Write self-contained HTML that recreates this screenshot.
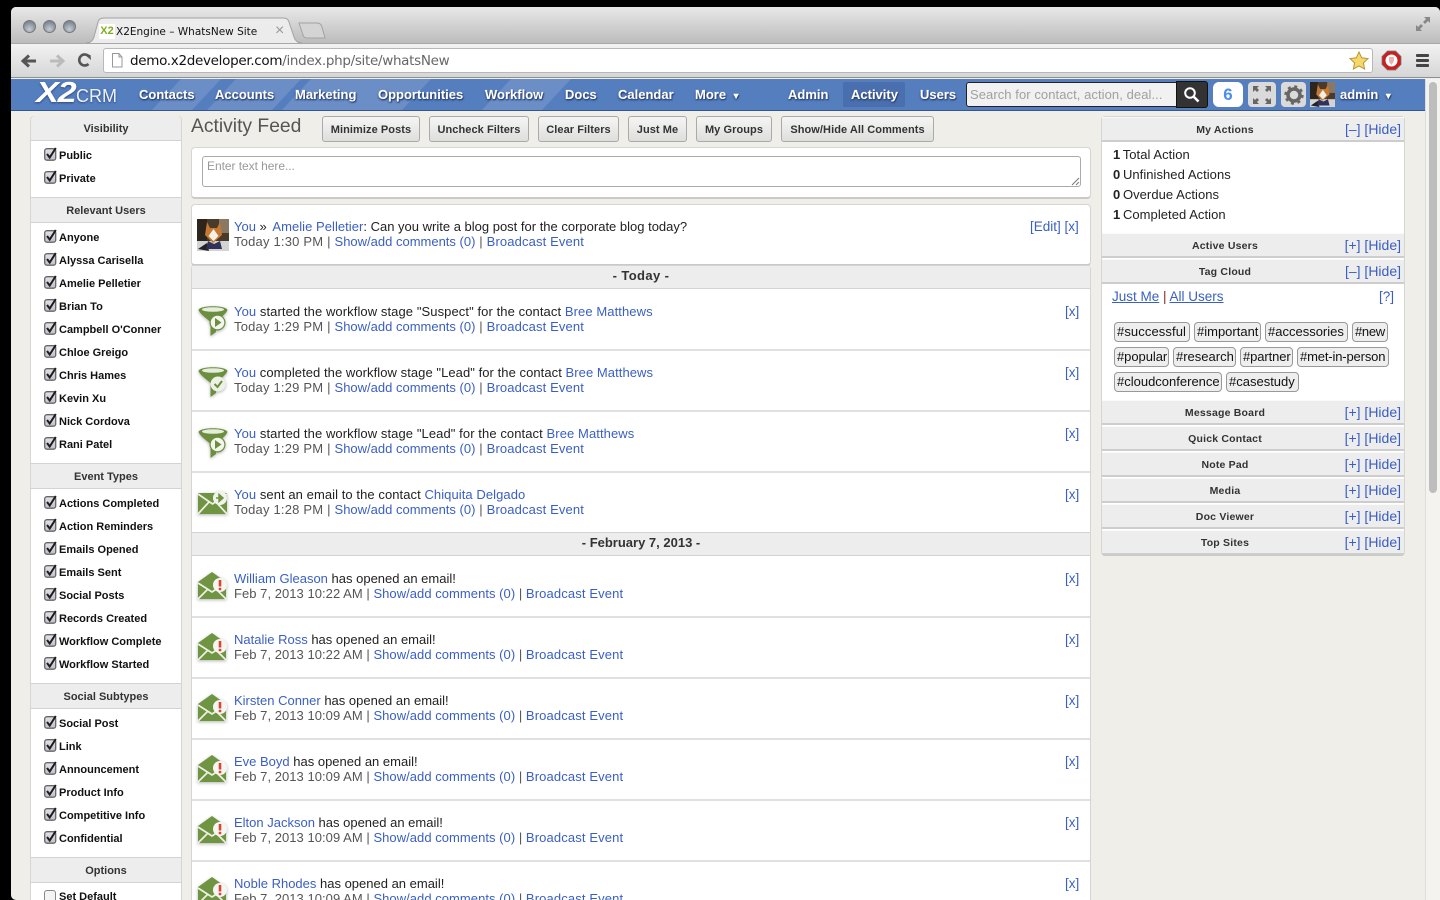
<!DOCTYPE html>
<html><head><meta charset="utf-8"><title>X2Engine - WhatsNew Site</title>
<style>
*{box-sizing:border-box}
html,body{margin:0;padding:0;width:1440px;height:900px;overflow:hidden;background:#000;font-family:"Liberation Sans",Arial,sans-serif}
.a{position:absolute;white-space:nowrap}
a{color:#3a5fc4;text-decoration:none}
#win{position:absolute;left:11px;top:7px;width:1429px;height:893px;background:#efeee9;border-radius:5px 5px 0 5px;overflow:hidden}
#root{position:absolute;left:0;top:0;width:1440px;height:900px;overflow:hidden}
.dot{position:absolute;top:20px;width:13px;height:13px;border-radius:50%;background:radial-gradient(circle at 50% 75%,#c4ccd6,#7d8793 75%);border:1px solid #777}
.nav{position:absolute;top:87px;color:#fff;font-weight:bold;font-size:13px;line-height:15px;text-shadow:0 1px 2px #1d3360,1px 1px 1px #31508f,0 0 1px #fff;white-space:nowrap}
.panel{position:absolute;background:#fff;border:1px solid #d5d5d2;border-bottom:2px solid #c9c9c6;border-radius:4px}
.h{position:absolute;background:#ededed;border-top:1px solid #d3d3d3;border-bottom:1px solid #d3d3d3;text-align:center;font-weight:bold;font-size:11px;color:#333}
.c{position:absolute;left:59px;font-size:11px;font-weight:bold;color:#111;line-height:13px;white-space:nowrap}
.cb{position:absolute;left:44px;width:13px;height:14px}
.btn{position:absolute;top:116px;height:26px;border:1px solid #aaa;border-radius:3px;background:linear-gradient(#f5f5f3,#dededc);font-weight:bold;font-size:11px;color:#333;line-height:26px;text-align:center;letter-spacing:.07px;white-space:nowrap}
.f{position:absolute;left:234px;font-size:13px;line-height:15px;color:#222;white-space:nowrap;letter-spacing:.085px}
.o{letter-spacing:0}
.g{color:#555;letter-spacing:.2px}
.g a{letter-spacing:.04px}
.g:not(.d) a:first-child{letter-spacing:0}
.g a:last-child{letter-spacing:.13px}
.d{letter-spacing:.04px}
.x{position:absolute;left:1065px;font-size:13.500px;line-height:15px;color:#3a5fc4}
.ln{position:absolute;left:192px;width:898px;height:2px;background:#e0e0e0}
.dh{position:absolute;left:192px;width:898px;height:24px;background:#ededed;border-top:1px solid #d3d3d3;border-bottom:1px solid #d3d3d3;text-align:center;font-weight:bold;font-size:13px;line-height:20px;color:#333}
.ic{position:absolute;left:197px;width:32px;height:32px}
.sh{filter:drop-shadow(0 1px 1.500px rgba(0,0,0,.3))}
.rh{position:absolute;left:1102px;width:302px;height:25px;background:#ededed;border-top:1px solid #fafafa;border-bottom:2px solid #cdcdcd;text-align:center;font-weight:bold;font-size:10.500px;line-height:24px;color:#333;letter-spacing:.2px;padding-right:56px}
.rl{position:absolute;right:0;top:0;font-weight:normal;font-size:14px;line-height:22px;letter-spacing:0;padding-right:3px;color:#3a5fc4;white-space:pre}
.t{position:absolute;height:20px;border:1px solid #999;border-radius:4px;background:#eee;font-size:13px;line-height:18px;padding:0 2px;color:#111;white-space:nowrap}
.ma{position:absolute;left:1113px;font-size:13px;line-height:15px;color:#222;letter-spacing:.05px;white-space:nowrap}
.ma b{margin-right:-1px}
</style></head><body>
<svg width="0" height="0" style="position:absolute">
<linearGradient id="cbg" x1="0" y1="0" x2="0" y2="1"><stop offset="0" stop-color="#e2e2ea"/><stop offset="1" stop-color="#bfc2cc"/></linearGradient>
<symbol id="ck" viewBox="0 0 13 14"><rect x=".7" y="1.700" width="11" height="11.500" rx="2.200" fill="url(#cbg)" stroke="#666" stroke-width="1.300"/><path d="M3 7l2.700 3.500L11.800 1" fill="none" stroke="#1c1c1c" stroke-width="2"/></symbol>
<symbol id="fn" viewBox="0 0 32 32"><path d="M1.500 6C3 1 29 1 30.500 6C29 10 23 14 19 18V28L13.500 32V18C9 14 3 10 1.500 6Z" fill="#6b8f3f"/><ellipse cx="16" cy="5.500" rx="11" ry="2.300" fill="#e7eddc"/><circle cx="20.500" cy="18.500" r="8" fill="#6b8f3f"/><circle cx="20.500" cy="18.500" r="6.800" fill="#f3f6ec"/><path d="M18 14l6.500 4.500-6.500 4.500z" fill="#6b8f3f"/></symbol>
<symbol id="fc" viewBox="0 0 32 32"><path d="M1.500 6C3 1 29 1 30.500 6C29 10 23 14 19 18V28L13.500 32V18C9 14 3 10 1.500 6Z" fill="#6b8f3f"/><ellipse cx="16" cy="5.500" rx="11" ry="2.300" fill="#e7eddc"/><circle cx="21" cy="19" r="7.500" fill="#eef1e6"/><path d="M17.500 19l3 3 4.500-6" fill="none" stroke="#6b8f3f" stroke-width="2"/></symbol>
<symbol id="es" viewBox="0 0 32 32"><rect x="1" y="5" width="29" height="21" fill="#6f9442"/><path d="M1 6l14.500 10L30 6M1 26l11-12M30 26L19 14" fill="none" stroke="#eef2e5" stroke-width="1.700"/><circle cx="23" cy="10" r="7" fill="#f1f4ea"/><path d="M19 10h5M22 6.500l4 3.500-4 3.500z" fill="#6f9442" stroke="#6f9442" stroke-width="1.500"/></symbol>
<symbol id="eo" viewBox="0 0 32 32"><path d="M1 10L15 0 29 10V27H1Z" fill="#6f9442"/><path d="M1 11l14 9 14-9M1 27l10-10M29 27L19 17" fill="none" stroke="#eef2e5" stroke-width="1.700"/><circle cx="23" cy="13" r="7" fill="#f6f6f1"/><path d="M23 8v6.500" stroke="#d9443a" stroke-width="2.600"/><circle cx="23" cy="17" r="1.400" fill="#d9443a"/></symbol>
<symbol id="dog" viewBox="0 0 32 32"><rect width="32" height="32" fill="#4a3a2a"/><rect x="0" width="10" height="22" fill="#2d241c"/><rect x="22" width="10" height="14" fill="#8a7862"/><rect y="22" width="32" height="10" fill="#d3d3d3"/><path d="M1 30l9-6 2 8z" fill="#222"/><path d="M10 3l3 6h7l3-6 2 13-9 8-8-8z" fill="#c47a35"/><path d="M16.500 10l5 7-5 5-5-5z" fill="#f6efe4"/><path d="M9 30l2-8 6 3 6-3 2 8z" fill="#31315a"/></symbol>
</svg>
<div id="root">
<div id="win">
<div style="position:absolute;left:0;top:0;width:1429px;height:36px;background:linear-gradient(#e8e8e8,#bcbcbc)"></div>
<div style="position:absolute;left:0;top:36px;width:1429px;height:35px;background:linear-gradient(#f2f2f2,#d6d6d6);border-top:1px solid #a8a8a8;border-bottom:1px solid #8f8f8f"></div>
</div>
<div class="dot" style="left:23px"></div><div class="dot" style="left:43px"></div><div class="dot" style="left:63px"></div>
<svg class="a" style="left:75px;top:17px" width="260" height="27"><path d="M11 26Q17 26 19 20L23 5Q24 1 29 1H208Q213 1 214 5L219 20Q221 26 227 26" fill="#ececec" stroke="#a2a2a2"/><path d="M224 6H242Q246 6 247 10L250 21H232Q229 21 228 18Z" fill="#d4d4d4" stroke="#a2a2a2"/></svg>
<div class="a" style="left:99px;top:24px;width:16px;height:15px;background:#fff;color:#7fae1e;font-weight:bold;font-size:11px;line-height:15px;text-align:center">X2</div>
<div class="a" style="left:116px;top:24px;font-family:'DejaVu Sans',sans-serif;font-size:10.500px;line-height:16px;color:#111">X2Engine – WhatsNew Site</div>
<div class="a" style="left:275px;top:23px;font-size:16px;line-height:16px;color:#999">×</div>
<svg class="a" style="left:1415px;top:16px" width="16" height="16"><path d="M9 1h6v6l-2-2-3 3-2-2 3-3zM7 15H1V9l2 2 3-3 2 2-3 3z" fill="#888"/></svg>
<svg class="a" style="left:20px;top:52px" width="80" height="18"><path d="M16 9H5M9 3.500L3 9l6 5.500" fill="none" stroke="#555" stroke-width="3"/><path d="M30 9h11M37 3.500L43 9l-6 5.500" fill="none" stroke="#bbb" stroke-width="3"/><path d="M69 4.500A5.500 5.500 0 1 0 68.500 12" fill="none" stroke="#555" stroke-width="2.600"/><path d="M64 2l6.500 1 .5 5z" fill="#555"/></svg>
<div class="a" style="left:103px;top:48px;width:1270px;height:25px;background:#fff;border:1px solid #b8b8b8;border-radius:3px"></div>
<svg class="a" style="left:111px;top:53px" width="12" height="15"><path d="M1.500 .500H8L11 4V14H1.500Z" fill="#fff" stroke="#999"/><path d="M8 .500V4H11" fill="none" stroke="#999"/></svg>
<div class="a" style="left:130px;top:52px;font-family:'DejaVu Sans',sans-serif;font-size:13.500px;line-height:18px;color:#111;letter-spacing:-.31px">demo.x2developer.com<span style="color:#666">/index.php/site/whatsNew</span></div>
<svg class="a" style="left:1349px;top:51px" width="20" height="20"><path d="M10 1l2.700 5.800 6.300.8-4.600 4.300 1.200 6.200L10 15l-5.600 3.100 1.200-6.200L1 7.600l6.300-.8z" fill="#f5d76a" stroke="#b7953a"/></svg>
<svg class="a" style="left:1381px;top:50px" width="21" height="21"><path d="M6.500 1h8L20 6.500v8L14.500 20h-8L1 14.500v-8z" fill="#c9201f" stroke="#777" stroke-width=".8"/><circle cx="10.500" cy="10.500" r="6" fill="#fff"/><path d="M8 7h5v4l-2.500 4-2.500-3z" fill="#c9201f" opacity=".35"/></svg>
<div class="a" style="left:1416px;top:54px;width:13px;height:3px;background:#444;box-shadow:0 5px 0 #444,0 10px 0 #444;border-radius:1px"></div>

<div class="a" style="left:11px;top:79px;width:1414px;height:32px;background:#557ebf;border-bottom:1px solid #35578f;overflow:hidden">
<svg width="1414" height="32" style="position:absolute;left:0;top:0"><path d="M140 32L170 0H210L180 32ZM195 32L225 0H290L260 32ZM270 32L300 0H420L390 32ZM470 32L500 0H560L530 32Z" fill="#fff" opacity=".13"/></svg>
</div>
<div class="a" style="left:36px;top:77px;font-size:29px;line-height:33px;font-weight:bold;font-style:italic;color:#fff;letter-spacing:-1px;text-shadow:0 1px 2px #2b4780;transform:scaleX(1.180);transform-origin:0 0">X2</div>
<div class="a" style="left:76px;top:86px;font-size:18px;line-height:20px;color:#eef2f8;text-shadow:0 1px 2px #2b4780">CRM</div>
<div class="nav" style="left:139px">Contacts</div><div class="nav" style="left:215px">Accounts</div><div class="nav" style="left:295px">Marketing</div><div class="nav" style="left:378px">Opportunities</div><div class="nav" style="left:485px">Workflow</div><div class="nav" style="left:565px">Docs</div><div class="nav" style="left:618px">Calendar</div><div class="nav" style="left:695px">More <span style="font-size:9px;margin-left:2px">▼</span></div>
<div class="a" style="left:843px;top:82px;width:62px;height:25px;background:#4a6fae;border-radius:2px"></div>
<div class="nav" style="left:788px">Admin</div><div class="nav" style="left:851px">Activity</div><div class="nav" style="left:920px">Users</div>
<div class="a" style="left:966px;top:82px;width:212px;height:25px;background:#f1f1f1;border:1px solid #222;border-radius:3px 0 0 3px;padding-left:3px;font-size:13px;line-height:23px;color:#a0a0a0;letter-spacing:.07px">Search for contact, action, deal...</div>
<div class="a" style="left:1176px;top:81px;width:32px;height:27px;background:#333;border:1px solid #111;border-radius:0 3px 3px 0"></div>
<svg class="a" style="left:1183px;top:86px" width="18" height="18"><circle cx="7" cy="7" r="4.800" fill="none" stroke="#fff" stroke-width="2"/><path d="M10.500 10.500l5 5" stroke="#fff" stroke-width="2.600"/></svg>
<div class="a" style="left:1213px;top:82px;width:30px;height:25px;background:#fff;border-radius:6px;text-align:center;color:#4a90e8;font-weight:bold;font-size:17px;line-height:25px">6</div>
<div class="a" style="left:1248px;top:82px;width:28px;height:25px;background:#dadada;border-radius:4px"></div>
<svg class="a" style="left:1253px;top:86px" width="18" height="18" fill="#666"><path d="M0 0h6L4 2l2 2-2 2-2-2-2 2zM18 0h-6l2 2-2 2 2 2 2-2 2 2zM0 18h6l-2-2 2-2-2-2-2 2-2-2zM18 18h-6l2-2-2-2 2-2 2 2 2-2z"/></svg>
<div class="a" style="left:1281px;top:82px;width:25px;height:25px;background:#dadada;border-radius:4px"></div>
<svg class="a" style="left:1284px;top:85px" width="20" height="20"><circle cx="10" cy="10" r="6" fill="none" stroke="#666" stroke-width="3.500"/><circle cx="10" cy="10" r="8.500" fill="none" stroke="#666" stroke-width="2.400" stroke-dasharray="3 3.670"/></svg>
<svg class="a" style="left:1310px;top:82px" width="25" height="25"><use href="#dog"/></svg>
<div class="nav" style="left:1340px;top:87px">admin <span style="font-size:9px;margin-left:2px">▼</span></div>

<div class="a" style="left:1425px;top:79px;width:15px;height:821px;background:#f4f3ef;border-left:1px solid #ddd"></div>
<div class="a" style="left:1429px;top:82px;width:8px;height:411px;background:#bdbdbd;border-radius:4px"></div>

<!-- left sidebar -->
<div class="panel" style="left:30px;top:116px;width:152px;height:800px"></div>
<div class="h" style="left:31px;top:116px;width:150px;height:25px;line-height:27px;border-top:0;border-radius:4px 4px 0 0">Visibility</div>
<div class="h" style="left:31px;top:197px;width:150px;height:26px;line-height:27px">Relevant Users</div>
<div class="h" style="left:31px;top:463px;width:150px;height:26px;line-height:27px">Event Types</div>
<div class="h" style="left:31px;top:683px;width:150px;height:26px;line-height:27px">Social Subtypes</div>
<div class="h" style="left:31px;top:857px;width:150px;height:26px;line-height:27px">Options</div>
<svg class="cb" style="top:147px"><use href="#ck"/></svg><div class="c" style="top:150px">Public</div>
<svg class="cb" style="top:170px"><use href="#ck"/></svg><div class="c" style="top:173px">Private</div>
<svg class="cb" style="top:229px"><use href="#ck"/></svg><div class="c" style="top:232px">Anyone</div>
<svg class="cb" style="top:252px"><use href="#ck"/></svg><div class="c" style="top:255px">Alyssa Carisella</div>
<svg class="cb" style="top:275px"><use href="#ck"/></svg><div class="c" style="top:278px">Amelie Pelletier</div>
<svg class="cb" style="top:298px"><use href="#ck"/></svg><div class="c" style="top:301px">Brian To</div>
<svg class="cb" style="top:321px"><use href="#ck"/></svg><div class="c" style="top:324px">Campbell O'Conner</div>
<svg class="cb" style="top:344px"><use href="#ck"/></svg><div class="c" style="top:347px">Chloe Greigo</div>
<svg class="cb" style="top:367px"><use href="#ck"/></svg><div class="c" style="top:370px">Chris Hames</div>
<svg class="cb" style="top:390px"><use href="#ck"/></svg><div class="c" style="top:393px">Kevin Xu</div>
<svg class="cb" style="top:413px"><use href="#ck"/></svg><div class="c" style="top:416px">Nick Cordova</div>
<svg class="cb" style="top:436px"><use href="#ck"/></svg><div class="c" style="top:439px">Rani Patel</div>
<svg class="cb" style="top:495px"><use href="#ck"/></svg><div class="c" style="top:498px">Actions Completed</div>
<svg class="cb" style="top:518px"><use href="#ck"/></svg><div class="c" style="top:521px">Action Reminders</div>
<svg class="cb" style="top:541px"><use href="#ck"/></svg><div class="c" style="top:544px">Emails Opened</div>
<svg class="cb" style="top:564px"><use href="#ck"/></svg><div class="c" style="top:567px">Emails Sent</div>
<svg class="cb" style="top:587px"><use href="#ck"/></svg><div class="c" style="top:590px">Social Posts</div>
<svg class="cb" style="top:610px"><use href="#ck"/></svg><div class="c" style="top:613px">Records Created</div>
<svg class="cb" style="top:633px"><use href="#ck"/></svg><div class="c" style="top:636px">Workflow Complete</div>
<svg class="cb" style="top:656px"><use href="#ck"/></svg><div class="c" style="top:659px">Workflow Started</div>
<svg class="cb" style="top:715px"><use href="#ck"/></svg><div class="c" style="top:718px">Social Post</div>
<svg class="cb" style="top:738px"><use href="#ck"/></svg><div class="c" style="top:741px">Link</div>
<svg class="cb" style="top:761px"><use href="#ck"/></svg><div class="c" style="top:764px">Announcement</div>
<svg class="cb" style="top:784px"><use href="#ck"/></svg><div class="c" style="top:787px">Product Info</div>
<svg class="cb" style="top:807px"><use href="#ck"/></svg><div class="c" style="top:810px">Competitive Info</div>
<svg class="cb" style="top:830px"><use href="#ck"/></svg><div class="c" style="top:833px">Confidential</div>
<div class="a" style="left:44px;top:890px;width:12px;height:14px;border:1px solid #888;border-radius:3px;background:#f4f4f4"></div><div class="c" style="top:891px">Set Default</div>

<!-- top bar -->
<div class="a" style="left:191px;top:115px;font-size:19.300px;line-height:24px;color:#555">Activity Feed</div>
<div class="btn" style="left:322px;width:98px">Minimize Posts</div>
<div class="btn" style="left:429px;width:100px">Uncheck Filters</div>
<div class="btn" style="left:538px;width:81px">Clear Filters</div>
<div class="btn" style="left:628px;width:59px">Just Me</div>
<div class="btn" style="left:696px;width:76px">My Groups</div>
<div class="btn" style="left:781px;width:153px">Show/Hide All Comments</div>

<!-- post box -->
<div class="panel" style="left:191px;top:147px;width:900px;height:52px"></div>
<div class="a" style="left:202px;top:156px;width:879px;height:31px;border:1px solid #aaa;border-radius:3px;background:#fff;padding:2px 4px;font-size:12px;line-height:14px;color:#999;letter-spacing:-.05px">Enter text here...</div>
<svg class="a" style="left:1071px;top:177px" width="9" height="9"><path d="M1 8l7-7M5 8l3-3" stroke="#777"/></svg>

<!-- pinned post -->
<div class="panel" style="left:191px;top:204px;width:900px;height:62px"></div>
<svg class="ic" style="top:219px"><use href="#dog"/></svg>
<div class="f" style="top:219px;letter-spacing:0"><a>You</a> » <a style="margin-left:2px;letter-spacing:.04px">Amelie Pelletier</a>: Can you write a blog post for the corporate blog today?</div>
<div class="f g" style="top:234px">Today 1:30 PM | <a>Show/add comments (0)</a> | <a>Broadcast Event</a></div>
<div class="x" style="left:1030px;top:219px">[Edit] [x]</div>

<!-- feed -->
<div class="panel" style="left:191px;top:265px;width:900px;height:660px"></div>
<div class="dh" style="top:265px;letter-spacing:.4px">- Today -</div>
<svg class="ic sh" style="top:304px"><use href="#fn"/></svg>
<div class="f" style="top:304px"><a>You</a> started the workflow stage "Suspect" for the contact <a>Bree Matthews</a></div>
<div class="f g" style="top:319px">Today 1:29 PM | <a>Show/add comments (0)</a> | <a>Broadcast Event</a></div>
<div class="x" style="top:304px">[x]</div>
<div class="ln" style="top:349px"></div>
<svg class="ic sh" style="top:365px"><use href="#fc"/></svg>
<div class="f" style="top:365px;letter-spacing:.06px"><a>You</a> completed the workflow stage "Lead" for the contact <a>Bree Matthews</a></div>
<div class="f g" style="top:380px">Today 1:29 PM | <a>Show/add comments (0)</a> | <a>Broadcast Event</a></div>
<div class="x" style="top:365px">[x]</div>
<div class="ln" style="top:410px"></div>
<svg class="ic sh" style="top:426px"><use href="#fn"/></svg>
<div class="f" style="top:426px"><a>You</a> started the workflow stage "Lead" for the contact <a>Bree Matthews</a></div>
<div class="f g" style="top:441px">Today 1:29 PM | <a>Show/add comments (0)</a> | <a>Broadcast Event</a></div>
<div class="x" style="top:426px">[x]</div>
<div class="ln" style="top:471px"></div>
<svg class="ic sh" style="top:488px"><use href="#es"/></svg>
<div class="f" style="top:487px;letter-spacing:.07px"><a>You</a> sent an email to the contact <a>Chiquita Delgado</a></div>
<div class="f g" style="top:502px">Today 1:28 PM | <a>Show/add comments (0)</a> | <a>Broadcast Event</a></div>
<div class="x" style="top:487px">[x]</div>
<div class="dh" style="top:532px">- February 7, 2013 -</div>
<svg class="ic sh" style="top:572px"><use href="#eo"/></svg>
<div class="f o" style="top:571px"><a>William Gleason</a> has opened an email!</div>
<div class="f g d" style="top:586px">Feb 7, 2013 10:22 AM | <a>Show/add comments (0)</a> | <a>Broadcast Event</a></div>
<div class="x" style="top:571px">[x]</div>
<div class="ln" style="top:616px"></div>
<svg class="ic sh" style="top:633px"><use href="#eo"/></svg>
<div class="f o" style="top:632px"><a>Natalie Ross</a> has opened an email!</div>
<div class="f g d" style="top:647px">Feb 7, 2013 10:22 AM | <a>Show/add comments (0)</a> | <a>Broadcast Event</a></div>
<div class="x" style="top:632px">[x]</div>
<div class="ln" style="top:677px"></div>
<svg class="ic sh" style="top:694px"><use href="#eo"/></svg>
<div class="f o" style="top:693px"><a>Kirsten Conner</a> has opened an email!</div>
<div class="f g d" style="top:708px">Feb 7, 2013 10:09 AM | <a>Show/add comments (0)</a> | <a>Broadcast Event</a></div>
<div class="x" style="top:693px">[x]</div>
<div class="ln" style="top:738px"></div>
<svg class="ic sh" style="top:755px"><use href="#eo"/></svg>
<div class="f o" style="top:754px"><a>Eve Boyd</a> has opened an email!</div>
<div class="f g d" style="top:769px">Feb 7, 2013 10:09 AM | <a>Show/add comments (0)</a> | <a>Broadcast Event</a></div>
<div class="x" style="top:754px">[x]</div>
<div class="ln" style="top:799px"></div>
<svg class="ic sh" style="top:816px"><use href="#eo"/></svg>
<div class="f o" style="top:815px"><a>Elton Jackson</a> has opened an email!</div>
<div class="f g d" style="top:830px">Feb 7, 2013 10:09 AM | <a>Show/add comments (0)</a> | <a>Broadcast Event</a></div>
<div class="x" style="top:815px">[x]</div>
<div class="ln" style="top:860px"></div>
<svg class="ic sh" style="top:877px"><use href="#eo"/></svg>
<div class="f o" style="top:876px"><a>Noble Rhodes</a> has opened an email!</div>
<div class="f g d" style="top:891px">Feb 7, 2013 10:09 AM | <a>Show/add comments (0)</a> | <a>Broadcast Event</a></div>
<div class="x" style="top:876px">[x]</div>

<!-- right sidebar -->
<div class="panel" style="left:1101px;top:116px;width:304px;height:440px"></div>
<div class="rh" style="top:117px">My Actions<span class="rl">[–] [Hide]</span></div>
<div class="ma" style="top:147px"><b>1</b> Total Action</div>
<div class="ma" style="top:167px"><b>0</b> Unfinished Actions</div>
<div class="ma" style="top:187px"><b>0</b> Overdue Actions</div>
<div class="ma" style="top:207px"><b>1</b> Completed Action</div>
<div class="rh" style="top:233px">Active Users<span class="rl">[+] [Hide]</span></div>
<div class="rh" style="top:259px">Tag Cloud<span class="rl">[–] [Hide]</span></div>
<div class="a" style="left:1112px;top:289px;font-size:13.500px;line-height:15px;color:#8a2b1c"><a style="text-decoration:underline">Just Me</a> | <a style="text-decoration:underline">All Users</a></div>
<div class="a" style="left:1379px;top:289px;font-size:13.500px;line-height:15px;color:#3a5fc4">[?]</div>
<div class="t" style="left:1114px;top:322px;width:76px;letter-spacing:.1px">#successful</div>
<div class="t" style="left:1194px;top:322px;width:67px">#important</div>
<div class="t" style="left:1265px;top:322px;width:83px">#accessories</div>
<div class="t" style="left:1352px;top:322px;width:36px;letter-spacing:-.3px">#new</div>
<div class="t" style="left:1114px;top:347px;width:55px;letter-spacing:-.05px">#popular</div>
<div class="t" style="left:1173px;top:347px;width:63px">#research</div>
<div class="t" style="left:1240px;top:347px;width:53px;letter-spacing:-.1px">#partner</div>
<div class="t" style="left:1297px;top:347px;width:92px;letter-spacing:-.15px">#met-in-person</div>
<div class="t" style="left:1114px;top:372px;width:108px">#cloudconference</div>
<div class="t" style="left:1226px;top:372px;width:73px">#casestudy</div>
<div class="rh" style="top:400px">Message Board<span class="rl">[+] [Hide]</span></div>
<div class="rh" style="top:426px">Quick Contact<span class="rl">[+] [Hide]</span></div>
<div class="rh" style="top:452px">Note Pad<span class="rl">[+] [Hide]</span></div>
<div class="rh" style="top:478px">Media<span class="rl">[+] [Hide]</span></div>
<div class="rh" style="top:504px">Doc Viewer<span class="rl">[+] [Hide]</span></div>
<div class="rh" style="top:530px">Top Sites<span class="rl">[+] [Hide]</span></div>
</div>
</body></html>
